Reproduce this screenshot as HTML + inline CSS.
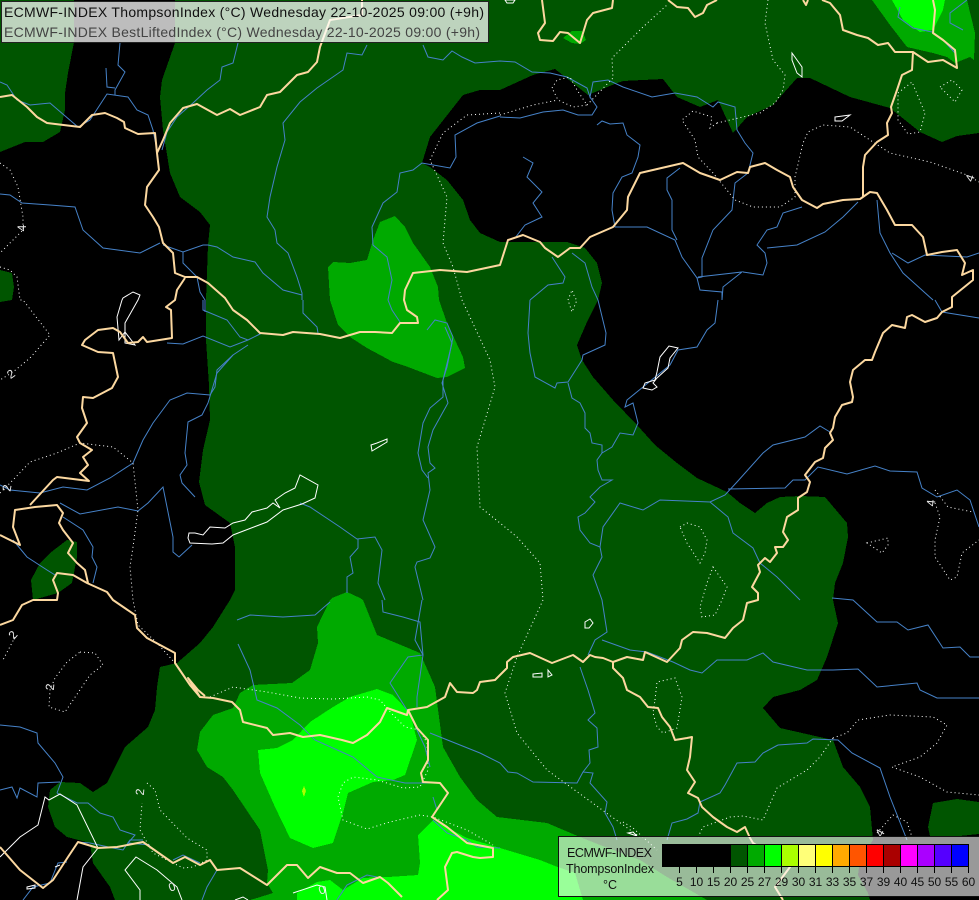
<!DOCTYPE html>
<html><head><meta charset="utf-8"><title>ECMWF-INDEX</title>
<style>
html,body{margin:0;padding:0;background:#000;width:979px;height:900px;overflow:hidden}
svg{display:block;position:absolute;left:0;top:0}
text{font-family:"Liberation Sans",sans-serif}
</style></head><body>
<svg width="979" height="900" viewBox="0 0 979 900" xmlns="http://www.w3.org/2000/svg">
<rect width="979" height="900" fill="#000"/>
<g shape-rendering="crispEdges">
<polygon fill="#005500" fill-rule="evenodd" points="175,0 175,43 162,80 160,97 163,130 170,173 180,197 200,212 210,225 208,245 206,300 206,340 209,385 210,420 203,450 199,482 205,505 230,523 235,547 235,590 230,600 213,627 200,643 177,663 160,667 157,687 155,710 148,727 125,747 107,783 93,792 80,783 60,782 50,790 48,807 55,827 67,837 90,843 93,863 110,887 115,900 870,900 868,893 858,875 860,860 873,840 870,807 860,787 843,767 833,740 780,728 763,708 773,697 800,690 817,680 827,657 838,623 833,600 835,583 843,563 848,537 847,523 825,497 800,496 780,497 767,503 755,513 740,503 727,492 697,478 677,463 655,445 637,425 613,400 593,377 582,360 577,345 587,322 598,300 602,283 597,263 585,248 567,242 500,242 480,233 470,220 463,200 447,180 430,167 422,163 430,137 463,95 480,90 500,90 533,75 555,69 588,95 617,83 623,81 663,79 677,97 700,107 718,100 733,133 747,117 773,105 797,78 810,78 850,97 890,108 920,132 942,142 957,136 979,133 979,0 Z M709,57 718,54 731,56 720,73 Z M517,394 525,399 533,400 542,447 540,467 532,487 517,493 505,491 490,478 480,462 473,445 472,432 480,420 Z M557,663 575,661 583,668 603,683 623,713 630,733 628,773 618,783 607,783 583,771 562,763 552,752 549,732 552,687 Z"/>
<polygon fill="#005500" points="0,0 74,0 74,42 68,73 65,93 65,110 60,132 43,142 25,142 0,152"/>
<polygon fill="#005500" points="0,270 12,273 14,287 12,300 0,302"/>
<polygon fill="#005500" points="67,540 77,542 77,557 72,583 58,593 33,600 31,580 40,563 50,553"/>
<polygon fill="#005500" points="928,827 933,803 957,799 979,802 979,834 950,837 930,836"/>
<polygon fill="#00aa00" points="395,216 405,227 413,243 430,267 438,287 439,300 447,323 463,357 465,368 447,377 437,378 408,367 393,362 367,348 350,337 338,325 330,300 328,267 333,262 350,263 367,260 373,240 380,222"/>
<polygon fill="#00aa00" points="563,38 572,31 582,31 586,40 580,44 572,43"/>
<polygon fill="#00aa00" points="347,592 360,598 363,600 377,635 420,653 435,687 443,747 460,777 477,800 497,817 547,823 580,837 600,845 640,860 667,877 707,900 250,900 257,898 273,893 267,883 268,870 260,830 233,790 223,777 207,767 197,750 200,732 213,715 233,708 240,693 253,685 292,683 310,670 318,643 317,627 330,600 332,598"/>
<polygon fill="#00aa00" points="872,0 890,25 907,47 933,53 947,57 955,63 970,57 974,60 975,33 967,0"/>
<polygon fill="#00ff00" points="892,0 903,20 920,32 933,30 943,10 945,0"/>
<polygon fill="#00ff00" points="258,750 277,748 293,740 310,722 333,707 350,697 377,689 393,695 410,713 417,740 405,775 393,780 373,782 348,793 343,813 333,843 313,848 290,838 275,807 260,773"/>
<polygon fill="#00ff00" points="297,900 297,893 317,882 330,880 343,890 363,878 388,877 418,875 420,863 418,835 433,820 467,838 500,848 540,860 555,866 575,873 583,900"/>
<polygon fill="#aaff00" points="304,786 306,791 304,797 302,791"/>
</g>

<g fill="none" stroke="#4682c8" stroke-width="1">
<polyline points="120,43 118,65 125,72 115,90 115,95"/>
<polyline points="106,68 107,87 115,88"/>
<polyline points="0,82 7,85 17,100 30,105 50,103 78,127 90,120 107,94 128,97 137,110 148,115 153,130 157,150"/>
<polyline points="238,43 233,63 222,67 220,80 207,90 193,103 177,117 167,132 162,150"/>
<polyline points="367,45 362,55 347,53 343,70 317,88 300,102 283,123 285,140 277,167 270,197 267,217 275,230 277,243 288,253 297,277 302,293 302,300"/>
<polyline points="423,45 428,57 443,60 452,51 462,57 475,63 500,61 515,62 532,72 550,73 567,77 587,88 590,97 593,82 608,80 623,87 652,97 675,93 697,97 713,107 718,102 735,107 737,130 745,143 753,153 748,173 735,183 732,210 713,230 702,258 702,277 697,278"/>
<polyline points="500,117 520,118 543,112 563,110 578,115 592,115 597,107 590,97"/>
<polyline points="597,125 602,121 610,124 623,123 627,135 640,145 638,157 632,173 622,177 613,193 612,210 615,227 647,227 675,240 682,257 697,278 700,290 722,292 722,300"/>
<polyline points="523,157 533,163 527,177 542,192 533,203 542,217 525,225 515,238"/>
<polyline points="680,168 667,178 667,190 672,200 672,230 677,240"/>
<polyline points="743,272 763,275 767,263 765,253 757,245 767,230 777,227 783,213 802,207"/>
<polyline points="767,248 797,245 825,232 843,217 858,202"/>
<polyline points="698,277 742,272 723,287 722,300"/>
<polyline points="877,200 880,233 890,253 903,273 933,300"/>
<polyline points="892,253 908,263 925,255 967,257 979,253"/>
<polyline points="900,7 898,17 913,28 932,32"/>
<polyline points="967,0 950,13 950,23 963,30"/>
<polyline points="943,40 955,53"/>
<polyline points="552,257 565,277 563,283 548,285 530,300"/>
<polyline points="572,253 585,263 592,287 598,300 606,333 605,345 583,355 582,360 568,382 557,383 555,388 535,377 530,353 528,333 530,300"/>
<polyline points="568,383 572,398 580,403 585,413 585,428 590,433 592,443 602,445 602,453 597,460 598,470 602,480 612,480 600,487 590,497 595,502 585,513 578,517 580,530 590,543 600,547 602,557 593,575 602,600 607,632 595,640 588,655"/>
<polyline points="602,453 612,447 620,433 633,435 638,423 633,403 625,407 627,400 643,387 670,365 678,350 697,347 707,330 715,323 718,300"/>
<polyline points="600,547 603,527 620,503 643,510 660,500 710,502 725,495 737,482 763,453 773,445 805,437 820,426 830,432"/>
<polyline points="728,489 785,488 793,480 805,480 818,467 847,474 875,466 890,471 917,472 922,488 937,497 957,490 970,500 979,527"/>
<polyline points="710,502 728,517 733,533 753,548 760,563 777,577 800,600"/>
<polyline points="935,300 942,312 979,318"/>
<polyline points="832,598 853,600 877,622 897,622 908,630 928,625 943,648 960,647 970,657 979,657"/>
<polyline points="602,640 630,650 647,652 673,662 690,670 702,673 717,660 747,660 763,653 773,662 807,670 833,670 858,669 877,687 917,683 920,690 937,698 979,698"/>
<polyline points="580,667 588,690 595,713 588,720 597,728 598,747 589,750 590,763 583,772 577,783 533,782 517,773 508,772 500,763 480,753 430,733"/>
<polyline points="583,772 593,773 590,783 607,802 605,813 613,827 617,840"/>
<polyline points="778,745 807,743 813,739 838,740 852,753 880,768 890,797 907,840"/>
<polyline points="778,745 763,753 755,762 737,763 725,785 720,793 700,802 698,813 687,819 672,823 667,840"/>
<polyline points="167,343 183,344 203,336 230,347 248,340 258,335 262,333"/>
<polyline points="203,300 203,310 227,320 240,337 248,340"/>
<polyline points="233,355 217,370 215,387 210,395 187,393 170,400 153,423 143,440 133,463 110,478 87,490 63,487 40,493 10,490 0,485"/>
<polyline points="248,345 233,355 217,373 208,403 202,415 188,422 185,453 187,465 180,475 182,483 195,497"/>
<polyline points="60,503 80,514 118,507 138,511 148,503 163,487 173,537 173,552 179,557 192,545"/>
<polyline points="63,517 83,530 93,547 92,557 97,567 93,583"/>
<polyline points="13,540 27,557 47,570 55,575"/>
<polyline points="300,503 310,507 340,527 357,539 375,537 382,550 378,583 385,600"/>
<polyline points="358,539 358,548 350,557 353,573 347,577 347,593"/>
<polyline points="303,300 303,313 317,327 318,333"/>
<polyline points="388,300 392,310 400,322"/>
<polyline points="427,330 435,320 447,323 453,337 447,367 442,383 448,403 433,430 428,447 430,463 435,468 428,473 430,490 423,520 435,547 430,558 417,562 415,567 423,600"/>
<polyline points="445,327 452,343 443,380 443,397 430,408 423,423 418,453 422,470 428,478"/>
<polyline points="372,227 373,245 387,257 392,280 388,300"/>
<polyline points="372,227 383,203 397,192 400,173 413,170 422,163 450,168 456,157 455,135 477,123 500,116"/>
<polyline points="208,245 217,247 233,257 255,262 263,273 283,290 302,295"/>
<polyline points="160,243 140,253 103,248 83,230 75,207 50,205 22,203 10,195 0,194"/>
<polyline points="163,245 183,252 203,245 208,245"/>
<polyline points="183,252 183,263 197,277 200,292 205,300 205,312"/>
<polyline points="0,725 20,727 37,733 38,743 55,763 63,777 57,793"/>
<polyline points="60,782 38,783 37,797 20,788 17,798 12,787 0,790"/>
<polyline points="57,793 77,803 88,803 100,813 113,817 120,830 135,835 128,843 150,845"/>
<polyline points="237,620 250,615 283,617 315,615 330,602"/>
<polyline points="238,644 250,670 257,700 277,708 300,725 315,740 353,757 377,777 405,783 433,783"/>
<polyline points="382,600 383,612 403,617 420,622 423,655 408,657 390,683 407,710"/>
<polyline points="422,600 418,623 415,640 423,655 417,697 417,707"/>
<polyline points="413,720 417,730 425,747 430,767"/>
<polyline points="433,797 437,810"/>
<polyline points="433,820 447,833 467,840 477,847 500,848"/>
<polyline points="217,870 207,887 202,900"/>
<polyline points="337,900 347,885 367,875 377,877"/>
<polyline points="200,863 183,855 173,860"/>
<polyline points="23,900 33,887 50,883 58,863 67,862"/>
<polyline points="78,842 90,843 113,848 123,850 130,840 143,840"/>
</g>

<g fill="none" stroke="#fff" stroke-width="1">
<polyline points="0,857 7,850 20,837 38,825 45,797 49,800 60,794 77,805 98,848 83,867 77,900"/>
<polyline points="182,900 177,887 157,870 136,857 125,870 140,890 140,900"/>
<polyline points="293,893 317,885 325,887 327,900"/>
<polyline points="235,900 243,897 248,900"/>
<polygon points="27,887 35,885 35,888 27,889"/>
<polyline points="55,867 60,865"/>
<polygon points="189,533 195,533 203,535 210,527 225,528 233,523 245,520 252,512 267,508 273,503 280,508 275,500 285,493 295,488 300,475 318,485 315,498 302,504 283,510 267,522 233,535 223,543 212,544 190,543 188,538"/>
<polygon points="371,445 377,443 387,439 387,442 372,451"/>
<polyline points="122,300 117,317 119,340 125,332 135,345 125,343 125,323 138,300 140,295 133,292 123,298 122,300"/>
<polygon points="643,388 645,383 655,380 657,372 660,357 669,346 678,348 670,358 668,368 657,378 653,383 657,387 652,390"/>
<polygon points="792,53 802,67 802,77 797,73 792,60"/>
<polygon points="835,117 850,115 842,121 835,121"/>
<polygon points="505,0 515,0 513,3 507,3"/>
<polygon points="585,622 590,619 593,623 589,628 585,628"/>
<polygon points="533,674 542,673 542,677 533,677"/>
<polygon points="548,670 552,675 548,677"/>
<polygon points="628,833 633,832 637,836"/>
</g>

<g fill="none" stroke="#fff" stroke-width="1" stroke-dasharray="1 3">
<polyline points="0,163 10,170 18,187 23,217 23,230 0,253"/>
<polyline points="0,267 10,270 17,277 20,300 23,300 50,335 30,358 13,372 0,380"/>
<polyline points="0,493 13,480 30,462 57,453 80,443 113,447 133,463 138,510 133,547 130,567 133,600 138,625 157,643 175,663"/>
<polyline points="15,637 3,660"/>
<polygon points="80,652 95,653 103,665 90,675 65,712 49,707 50,690 55,678 67,662"/>
<polyline points="147,783 155,790 160,810 187,838 207,850 207,860 193,867 183,868 153,853 140,830 142,803"/>
<polyline points="210,697 233,687 267,692 300,698 333,699 367,697 380,700 393,715 405,727 420,730 427,743 428,770 420,787 403,788 377,780 353,777 343,783 338,797 343,820 367,829 390,822 420,815 433,817 467,830 493,845"/>
<polyline points="500,113 467,115 443,133 430,160 447,197 443,243 453,267 462,300 490,360 495,387 480,437 477,447 480,507 500,523 517,537 540,563 543,600 517,657 505,693 517,733 547,770 605,812 640,837"/>
<polyline points="500,115 533,105 558,100"/>
<polygon points="552,88 557,80 570,77 577,90 587,105 573,107 558,100"/>
<polyline points="587,105 613,78 612,58 643,27 667,5"/>
<polyline points="717,123 760,113 775,103 783,90 785,75 773,60 765,23 768,0"/>
<polyline points="717,123 710,128 712,117 693,111 682,120 695,140 698,157 713,173 735,200 753,207 780,207 795,197 795,177 803,143 808,132 823,125 850,127 873,142 890,153 930,162 967,175 979,182"/>
<polygon points="898,93 912,82 925,113 920,132 908,134 898,120"/>
<polygon points="940,87 952,80 962,90 955,102"/>
<polyline points="568,300 572,290 575,298 577,300 572,312 568,300"/>
<polygon points="680,527 687,523 700,527 707,540 705,553 700,563 687,543"/>
<polygon points="713,567 727,587 722,600 715,615 702,617 700,607 707,583"/>
<polyline points="935,490 948,507 973,512"/>
<polyline points="935,503 940,517 935,540 935,557 950,580 957,577 962,553 979,540"/>
<polygon points="867,543 888,538 888,545 882,553"/>
<polygon points="655,700 657,682 675,678 682,697 677,728 663,733 657,727 653,713"/>
<polyline points="833,738 847,733 858,720 890,715 933,717 947,725 937,743 920,757 892,767 920,777 947,792 979,795"/>
<polyline points="833,738 820,757 807,770 777,788 763,820 743,816 730,817 703,827 698,837"/>
<polyline points="877,833 893,815 907,822 912,837"/>
<polyline points="623,822 633,828 657,850"/>
</g>

<g fill="#e8e8e8" font-size="12">
<text x="22" y="232" transform="rotate(-90 22 228)" text-anchor="middle">4</text>
<text x="11" y="378" transform="rotate(-35 11 374)" text-anchor="middle">2</text>
<text x="7" y="492" transform="rotate(-80 7 488)" text-anchor="middle">2</text>
<text x="13" y="639" transform="rotate(-50 13 635)" text-anchor="middle">2</text>
<text x="50" y="691" transform="rotate(-85 50 687)" text-anchor="middle">2</text>
<text x="140" y="796" transform="rotate(-85 140 792)" text-anchor="middle">2</text>
<text x="172" y="891" text-anchor="middle" transform="rotate(-20 172 887)">0</text>
<text x="322" y="894" text-anchor="middle" transform="rotate(-20 322 890)">0</text>
<text x="970" y="182" text-anchor="middle" transform="rotate(-70 970 178)">4</text>
<text x="931" y="507" text-anchor="middle" transform="rotate(-85 931 503)">4</text>
<text x="880" y="837" text-anchor="middle" transform="rotate(-60 880 833)">4</text>
</g>

<g fill="none" stroke="#fcd8a0" stroke-width="2" stroke-linejoin="round">
<polyline points="0,97 12,95 27,107 37,117 47,123 80,127 92,115 105,113 117,118 124,122 125,128 138,134 155,133 157,153 159,170 147,187 145,205 153,217 159,227 163,243 173,253 175,273 185,277 197,277 208,283 225,298 233,310 247,320 260,333 283,335 293,332 320,334 340,338 360,332 375,332 392,333 400,323 418,323 417,317 407,310 404,300 405,290 413,273 440,270 467,272 500,265 508,240 523,235 540,242 545,248 558,257 570,248 580,248 590,237 613,227 627,210 628,197 640,173 683,163 700,173 720,180 737,172 748,173 750,167 765,163 777,170 790,177 793,187 802,200 817,208 823,204 843,200 860,199 870,192 877,193 887,210 895,225 912,225 923,237 927,255 942,252 957,250 965,263 962,275 973,270 973,280 952,297 952,307 942,312 937,318 925,322 912,315 907,317 905,328 892,325 883,333 875,352 872,360 865,360 853,370 850,382 853,397 852,402 842,405 835,417 833,428 830,433 833,440 825,448 823,458 815,462 805,475 810,482 807,492 798,498 798,510 787,517 783,532 788,540 783,547 775,547 777,553 770,562 765,558 758,565 760,572 752,587 758,593 758,600 747,603 743,620 733,628 725,638 707,633 693,632 682,640 680,648 667,662 645,652 643,660 627,657 613,662 603,658 595,657 590,655 583,662 573,655 552,663 530,653 513,657 507,662 507,668 495,680 480,682 477,690 473,693 457,692 450,683 445,697 427,707 408,710 407,715 387,708 380,722 367,735 353,743 342,740 320,735 303,737 290,733 273,735 267,728 243,722 240,710 232,702 213,698 200,697 190,685 175,663 175,653 147,638 137,628 135,615 113,600 107,592 87,583 73,575 57,573 53,580 58,593 57,600 33,600 22,605 13,620 0,625"/>
<polyline points="88,583 85,570 77,563 68,553 73,543 63,530 59,523 63,513 57,505 35,507 15,510 13,527 20,545 10,540 0,535"/>
<polyline points="30,505 53,480 57,477 89,481 80,473 88,465 83,457 92,450 80,443 77,437 87,423 82,408 83,397 93,398 112,388 118,377 113,353 98,352 82,345 85,340 98,330 113,328 120,332 128,343 138,342 143,337 147,342 172,338 171,310 166,307 175,300 177,290 185,278"/>
<polyline points="157,153 163,140 170,123 183,108 197,104 217,115 230,109 240,115 260,107 267,95 280,92 297,75 308,72 317,62 320,47 330,20 362,15 362,0"/>
<polyline points="542,0 545,23 538,33 540,40 553,41 560,32 568,33 580,43 587,20 593,13 612,8 613,0"/>
<polyline points="668,0 677,7 688,8 695,17 703,13 707,5 717,0"/>
<polyline points="803,0 806,5 808,0"/>
<polyline points="822,0 830,3 840,15 843,30 857,35 868,38 878,45 888,43 895,52 913,52 928,62 943,60 957,68 955,50 943,40 933,33 935,10 933,0"/>
<polyline points="913,52 912,70 902,75 897,90 891,107 892,113 887,123 888,135 877,142 865,155 863,167 863,197"/>
<polyline points="613,662 613,668 623,678 627,690 640,697 648,707 658,708 662,717 670,727 675,740 687,738 692,737 690,757 687,770 695,782 688,793 698,798 702,807 713,817 727,827 737,832 745,827 750,838 753,843 790,867 775,887 783,900"/>
<polyline points="408,710 417,728 428,740 428,760 421,773 423,782 440,783 448,793 438,808 432,817 447,827 467,843 493,848 493,857 480,858 473,857 457,852 452,853 445,867 448,890 437,900"/>
<polyline points="0,847 20,870 43,888 53,880 68,857 78,842 98,848 117,847 143,842 173,863 185,857 200,865 210,860 217,870 240,868 267,885 287,865 297,865 308,878 320,867 337,873 350,873 363,883 380,877 388,883 402,897"/>
<polyline points="190,685 197,692 200,697 188,678 198,690 205,696"/>
</g>

<!-- header -->
<rect x="1.5" y="1.5" width="487" height="41" fill="#fff" fill-opacity="0.74" stroke="#222" stroke-width="1"/>
<text x="4" y="17" font-size="14" fill="#111" textLength="480" lengthAdjust="spacing">ECMWF-INDEX ThompsonIndex (°C) Wednesday 22-10-2025 09:00 (+9h)</text>
<text x="4" y="37" font-size="14" fill="#444" textLength="476" lengthAdjust="spacing">ECMWF-INDEX BestLiftedIndex (°C) Wednesday 22-10-2025 09:00 (+9h)</text>

<!-- legend -->
<rect x="558.5" y="836.5" width="425" height="60" fill="#fff" fill-opacity="0.6" stroke="#111" stroke-width="1"/>
<text x="567" y="857" font-size="12.5" fill="#111" textLength="85" lengthAdjust="spacing">ECMWF-INDEX</text>
<text x="566" y="873" font-size="12.5" fill="#111" textLength="88" lengthAdjust="spacing">ThompsonIndex</text>
<text x="603" y="889" font-size="12.5" fill="#111" textLength="14" lengthAdjust="spacing">°C</text>
<g shape-rendering="crispEdges" stroke="#000" stroke-width="1">
<rect x="662.5" y="844.5" width="17" height="22" fill="#000"/>
<rect x="679.5" y="844.5" width="17" height="22" fill="#000"/>
<rect x="696.5" y="844.5" width="17" height="22" fill="#000"/>
<rect x="713.5" y="844.5" width="17" height="22" fill="#000"/>
<rect x="730.5" y="844.5" width="17" height="22" fill="#005500"/>
<rect x="747.5" y="844.5" width="17" height="22" fill="#00aa00"/>
<rect x="764.5" y="844.5" width="17" height="22" fill="#00ff00"/>
<rect x="781.5" y="844.5" width="17" height="22" fill="#aaff00"/>
<rect x="798.5" y="844.5" width="17" height="22" fill="#ffff78"/>
<rect x="815.5" y="844.5" width="17" height="22" fill="#ffff00"/>
<rect x="832.5" y="844.5" width="17" height="22" fill="#ffaa00"/>
<rect x="849.5" y="844.5" width="17" height="22" fill="#ff5500"/>
<rect x="866.5" y="844.5" width="17" height="22" fill="#ff0000"/>
<rect x="883.5" y="844.5" width="17" height="22" fill="#aa0000"/>
<rect x="900.5" y="844.5" width="17" height="22" fill="#ff00ff"/>
<rect x="917.5" y="844.5" width="17" height="22" fill="#aa00ff"/>
<rect x="934.5" y="844.5" width="17" height="22" fill="#5500ff"/>
<rect x="951.5" y="844.5" width="17" height="22" fill="#0000ff"/>
<path fill="none" d="M679.5 867v6M696.5 867v6M713.5 867v6M730.5 867v6M747.5 867v6M764.5 867v6M781.5 867v6M798.5 867v6M815.5 867v6M832.5 867v6M849.5 867v6M866.5 867v6M883.5 867v6M900.5 867v6M917.5 867v6M934.5 867v6M951.5 867v6M968.5 867v6"/>
</g>
<g font-size="12" fill="#111" text-anchor="middle">
<text x="679.5" y="886">5</text><text x="696.5" y="886">10</text><text x="713.5" y="886">15</text><text x="730.5" y="886">20</text><text x="747.5" y="886">25</text><text x="764.5" y="886">27</text><text x="781.5" y="886">29</text><text x="798.5" y="886">30</text><text x="815.5" y="886">31</text><text x="832.5" y="886">33</text><text x="849.5" y="886">35</text><text x="866.5" y="886">37</text><text x="883.5" y="886">39</text><text x="900.5" y="886">40</text><text x="917.5" y="886">45</text><text x="934.5" y="886">50</text><text x="951.5" y="886">55</text><text x="968.5" y="886">60</text>
</g>
</svg>
</body></html>
